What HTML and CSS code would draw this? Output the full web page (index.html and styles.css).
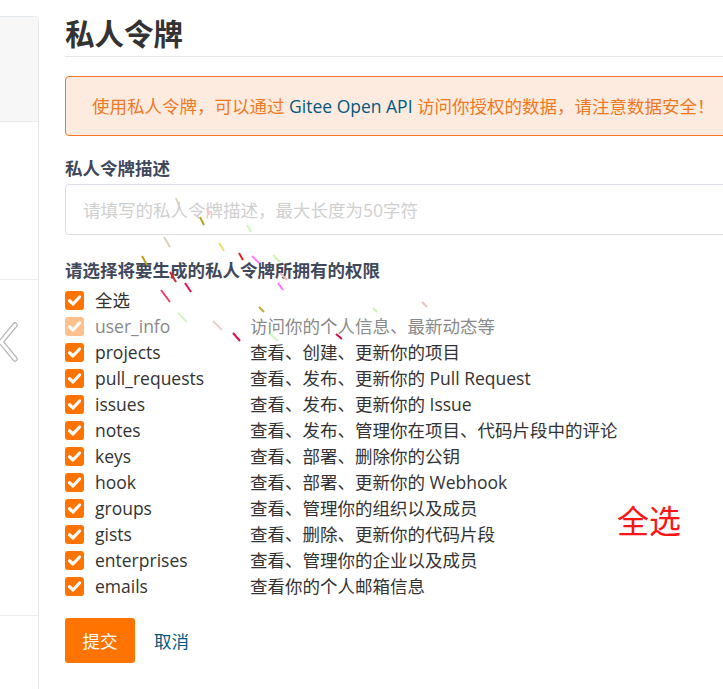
FILE: index.html
```html
<!DOCTYPE html>
<html lang="zh-CN">
<head>
<meta charset="utf-8">
<title>私人令牌</title>
<link rel="stylesheet" href="styles.css">
</head>
<body>
<div class="page">
  <aside class="sidebar">
    <div class="side-head"></div>
    <div class="side-sec s1"></div>
    <div class="side-sec s2"></div>
    <div class="side-sec s3"></div>
  </aside>

  <main class="main">
    <h1 class="title">私人令牌</h1>
    <div class="alert">使用私人令牌，可以通过 <a class="link">Gitee Open API</a> 访问你授权的数据，请注意数据安全！</div>

    <div class="field-label">私人令牌描述</div>
    <div class="input"><span class="placeholder">请填写的私人令牌描述，最大长度为50字符</span></div>

    <div class="field-label perm-label">请选择将要生成的私人令牌所拥有的权限</div>
    <ul class="perms">
      <li class="perm"><span class="cb"><svg viewBox="0 0 19 19"><path d="M4.5 9.8 L8 13 L14.5 6" /></svg></span><span class="name">全选</span><span class="desc"></span></li>
      <li class="perm disabled"><span class="cb"><svg viewBox="0 0 19 19"><path d="M4.5 9.8 L8 13 L14.5 6" /></svg></span><span class="name">user_info</span><span class="desc">访问你的个人信息、最新动态等</span></li>
      <li class="perm"><span class="cb"><svg viewBox="0 0 19 19"><path d="M4.5 9.8 L8 13 L14.5 6" /></svg></span><span class="name">projects</span><span class="desc">查看、创建、更新你的项目</span></li>
      <li class="perm"><span class="cb"><svg viewBox="0 0 19 19"><path d="M4.5 9.8 L8 13 L14.5 6" /></svg></span><span class="name">pull_requests</span><span class="desc">查看、发布、更新你的 Pull Request</span></li>
      <li class="perm"><span class="cb"><svg viewBox="0 0 19 19"><path d="M4.5 9.8 L8 13 L14.5 6" /></svg></span><span class="name">issues</span><span class="desc">查看、发布、更新你的 Issue</span></li>
      <li class="perm"><span class="cb"><svg viewBox="0 0 19 19"><path d="M4.5 9.8 L8 13 L14.5 6" /></svg></span><span class="name">notes</span><span class="desc">查看、发布、管理你在项目、代码片段中的评论</span></li>
      <li class="perm"><span class="cb"><svg viewBox="0 0 19 19"><path d="M4.5 9.8 L8 13 L14.5 6" /></svg></span><span class="name">keys</span><span class="desc">查看、部署、删除你的公钥</span></li>
      <li class="perm"><span class="cb"><svg viewBox="0 0 19 19"><path d="M4.5 9.8 L8 13 L14.5 6" /></svg></span><span class="name">hook</span><span class="desc">查看、部署、更新你的 Webhook</span></li>
      <li class="perm"><span class="cb"><svg viewBox="0 0 19 19"><path d="M4.5 9.8 L8 13 L14.5 6" /></svg></span><span class="name">groups</span><span class="desc">查看、管理你的组织以及成员</span></li>
      <li class="perm"><span class="cb"><svg viewBox="0 0 19 19"><path d="M4.5 9.8 L8 13 L14.5 6" /></svg></span><span class="name">gists</span><span class="desc">查看、删除、更新你的代码片段</span></li>
      <li class="perm"><span class="cb"><svg viewBox="0 0 19 19"><path d="M4.5 9.8 L8 13 L14.5 6" /></svg></span><span class="name">enterprises</span><span class="desc">查看、管理你的企业以及成员</span></li>
      <li class="perm"><span class="cb"><svg viewBox="0 0 19 19"><path d="M4.5 9.8 L8 13 L14.5 6" /></svg></span><span class="name">emails</span><span class="desc">查看你的个人邮箱信息</span></li>
    </ul>

    <div class="actions">
      <button class="btn-submit">提交</button>
      <a class="btn-cancel">取消</a>
    </div>
  </main>

  <svg class="chevron" viewBox="0 0 20 40" width="20" height="40">
    <polyline class="chev-shadow" points="16,3 2,20 16,37" />
    <polyline class="chev-line" points="16,3 2,20 16,37" />
  </svg>

  <div class="annot">全选</div>

  <svg class="trail" viewBox="0 0 723 689" width="723" height="689">
    <g stroke-width="2" stroke-linecap="butt">
      <line x1="176" y1="198" x2="179" y2="206" stroke="#dcd3b8"/>
      <line x1="200" y1="217" x2="204" y2="225" stroke="#b8a020"/>
      <line x1="207" y1="208" x2="209" y2="215" stroke="#f2c4c4"/>
      <line x1="247" y1="225" x2="251" y2="232" stroke="#cff5b4"/>
      <line x1="164" y1="237" x2="170" y2="247" stroke="#dad2b8"/>
      <line x1="219" y1="243" x2="224" y2="251" stroke="#e8e070"/>
      <line x1="239" y1="253" x2="243" y2="260" stroke="#e02020"/>
      <line x1="252" y1="256" x2="259" y2="263" stroke="#ff80ff"/>
      <line x1="273" y1="255" x2="280" y2="262" stroke="#c8f5b0"/>
      <line x1="142" y1="256" x2="147" y2="265" stroke="#b8a020"/>
      <line x1="170" y1="272" x2="176" y2="282" stroke="#e02030"/>
      <line x1="185" y1="283" x2="191" y2="292" stroke="#e0105a"/>
      <line x1="161" y1="290" x2="170" y2="302" stroke="#f04070"/>
      <line x1="278" y1="283" x2="283" y2="290" stroke="#ff70ff"/>
      <line x1="280" y1="273" x2="287" y2="280" stroke="#e6b8b0"/>
      <line x1="259" y1="307" x2="264" y2="312" stroke="#c0a840"/>
      <line x1="373" y1="308" x2="377" y2="312" stroke="#cdf5b0"/>
      <line x1="422" y1="302" x2="427" y2="307" stroke="#e8c4c0"/>
      <line x1="178" y1="313" x2="187" y2="322" stroke="#d4f5c4"/>
      <line x1="213" y1="321" x2="222" y2="330" stroke="#ecd0cc"/>
      <line x1="233" y1="333" x2="240" y2="341" stroke="#e0105a"/>
      <line x1="270" y1="334" x2="278" y2="341" stroke="#d0f5c0"/>
      <line x1="336" y1="334" x2="342" y2="339" stroke="#d0104a"/>
    </g>
  </svg>
</div>
</body>
</html>
```

FILE: styles.css
```css
* { box-sizing: border-box; }

html, body {
  margin: 0;
  padding: 0;
  background: #fff;
}

body {
  font-family: "Open Sans", "Noto Sans CJK SC", sans-serif;
  font-size: 17.5px;
  color: #333;
}

.page {
  position: relative;
  width: 723px;
  height: 689px;
  overflow: hidden;
  display: flex;
  align-items: flex-start;
}

/* left sidebar card */
.sidebar {
  flex: none;
  width: 39px;
  height: 700px;
  margin-top: 16px;
  border: 1px solid #e3e8ec;
  border-left: none;
  border-bottom: none;
  border-top-right-radius: 5px;
  display: flex;
  flex-direction: column;
}

.side-head {
  height: 105px;
  background: #f7f7f7;
  border-top-right-radius: 4px;
  border-bottom: 1px solid #ebebeb;
}

.side-sec { border-bottom: 1px solid #efefef; }
.s1 { height: 158px; }
.s2 { height: 336px; }
.s3 { flex: 1; border-bottom: none; }

/* main column */
.main {
  flex: none;
  width: 720px;
  padding-left: 26px;
}

.title {
  margin: 0;
  padding: 14px 0 2px;
  font-size: 29.5px;
  line-height: 40px;
  font-weight: 700;
  color: #333;
  border-bottom: 1px solid #e6e6e6;
}

.alert {
  margin-top: 19px;
  padding: 17px 26px;
  line-height: 24px;
  color: #f0781e;
  background: #fdebdf;
  border: 1px solid #f5782a;
  border-radius: 4px;
  white-space: nowrap;
}

.link { color: #005980; }

.field-label {
  margin-top: 20px;
  font-size: 17.5px;
  line-height: 24px;
  font-weight: 700;
  color: #40485b;
}

.input {
  margin-top: 4px;
  height: 51px;
  border: 1px solid #dcdde6;
  border-radius: 4px;
  padding-left: 17px;
  display: flex;
  align-items: center;
}

.placeholder { color: #cfcfcf; white-space: nowrap; }

.perm-label { margin-top: 23px; }

.perms {
  list-style: none;
  margin: 5px 0 0;
  padding: 0;
}

.perm {
  height: 26px;
  display: flex;
  align-items: center;
  white-space: nowrap;
}

.cb {
  flex: none;
  width: 19px;
  height: 19px;
  border-radius: 3px;
  background: #ff7300;
  margin-right: 11px;
  display: flex;
}

.cb svg {
  width: 19px;
  height: 19px;
  fill: none;
  stroke: #fff;
  stroke-width: 3.2;
  stroke-linecap: round;
  stroke-linejoin: round;
}

.name {
  flex: none;
  width: 155px;
  line-height: 26px;
}

.desc { line-height: 26px; }

.disabled .cb { background: #ffc08d; }
.disabled .name, .disabled .desc { color: #8a8a8a; }

.actions {
  margin-top: 19px;
  display: flex;
  align-items: center;
  gap: 19px;
}

.btn-submit {
  width: 70px;
  height: 45px;
  border: none;
  border-radius: 3px;
  background: #ff7300;
  color: #fff;
  font: inherit;
  font-size: 17.5px;
  padding: 0;
}

.btn-cancel {
  color: #005980;
}

/* overlays */
.chevron {
  position: absolute;
  left: -1px;
  top: 322px;
  fill: none;
  stroke-linecap: round;
  stroke-linejoin: round;
}

.chev-shadow {
  stroke: #a0a0a0;
  stroke-width: 5.5;
  opacity: 0.8;
}

.chev-line {
  stroke: #fff;
  stroke-width: 3;
}

.annot {
  position: absolute;
  left: 617px;
  top: 499px;
  font-family: "Noto Sans CJK SC", sans-serif;
  font-size: 32px;
  line-height: 40px;
  color: #ff1414;
}

.trail {
  position: absolute;
  left: 0;
  top: 0;
  pointer-events: none;
}
```
